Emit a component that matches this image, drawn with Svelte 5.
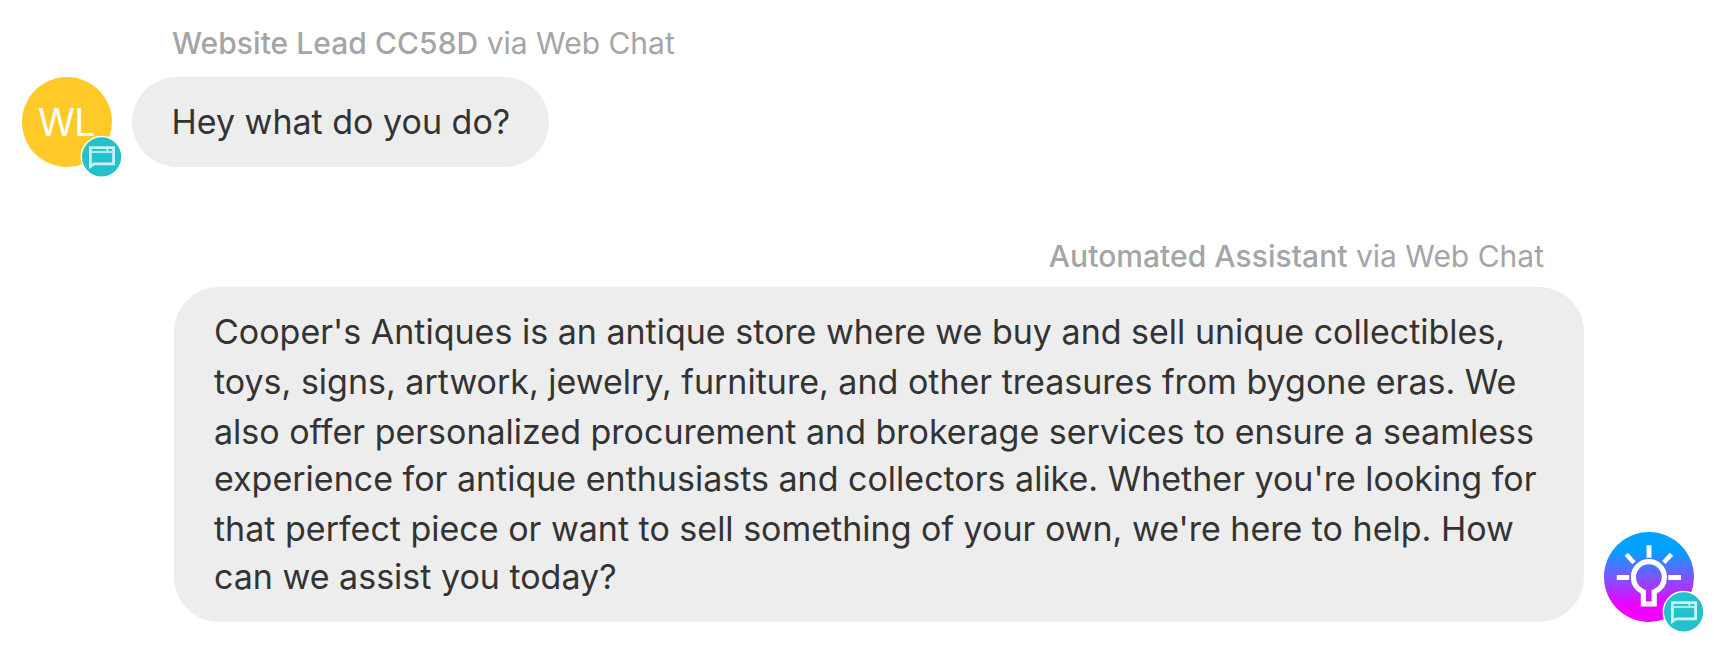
<script>
  const question = 'Hey what do you do?';
  const answer = [
    "Cooper's Antiques is an antique store where we buy and sell unique collectibles,",
    'toys, signs, artwork, jewelry, furniture, and other treasures from bygone eras. We',
    'also offer personalized procurement and brokerage services to ensure a seamless',
    "experience for antique enthusiasts and collectors alike. Whether you're looking for",
    "that perfect piece or want to sell something of your own, we're here to help. How",
    'can we assist you today?'
  ];
</script>

{#snippet badge()}
  <span class="badge">
    <svg viewBox="0 0 42 42" width="42" height="42">
      <circle cx="20.6" cy="20.8" r="20.3" fill="#22c1cc" stroke="#fff" stroke-width="1.4" />
      <path d="M9.4 11.6H32.6V27.8H13L9.4 30.4V11.6Z" fill="none" stroke="#c9f2f5" stroke-width="2.8" />
      <path d="M10 16H32" stroke="#a9e8ec" stroke-width="2.2" />
      <path d="M26.4 12V15.4" stroke="#d9f6f8" stroke-width="1.6" />
    </svg>
  </span>
{/snippet}

<main class="chat">
  <section class="message incoming">
    <header class="meta"><b>Website Lead CC58D</b> via Web Chat</header>
    <div class="row">
      <div class="avatar lead"><span class="initials">WL</span>{@render badge()}</div>
      <div class="bubble"><p>{question}</p></div>
    </div>
  </section>

  <section class="message outgoing">
    <header class="meta"><b>Automated Assistant</b> via Web Chat</header>
    <div class="row">
      <div class="bubble">
        {#each answer as line}<p>{line}</p>{/each}
      </div>
      <div class="avatar assistant">
        <svg viewBox="0 0 90 90" width="90" height="90" fill="none" stroke="#fff">
          <path d="M39.4 60V72H50.2V60C56.4 57.3 60.4 52 60.4 45.1A15.5 15.5 0 0 0 29.4 45.1C29.4 52 33.2 57.3 39.4 60Z" stroke-width="5.2" />
          <path d="M45 13.3V25.7M12.8 45.4H25.2M64.3 45.4H77" stroke-width="5" />
          <path d="M22.3 22.3L30 30.7M67.5 22.3L59.8 30.5" stroke-width="4.6" />
        </svg>
        {@render badge()}
      </div>
    </div>
  </section>
</main>

<style>
  :global(body) {
    background: #fff;
  }
  .chat {
    box-sizing: border-box;
    width: 1714px;
    height: 663px;
    padding: 23px 20px 0 22px;
    display: flex;
    flex-direction: column;
    gap: 68px;
    overflow: hidden;
    font-family: Inter, sans-serif;
  }
  .message {
    display: flex;
    flex-direction: column;
    gap: 13px;
  }
  .outgoing {
    gap: 11px;
  }
  .meta {
    height: 40px;
    line-height: 40px;
    font-size: 30px;
    color: #a5a5a5;
    white-space: nowrap;
  }
  .meta b {
    font-weight: 500;
    letter-spacing: 0.04px;
  }
  .incoming .meta {
    padding-left: 150px;
  }
  .outgoing .meta {
    height: 41px;
    line-height: 42px;
    padding-right: 150px;
    text-align: right;
  }
  .row {
    display: flex;
    align-items: flex-end;
    gap: 20px;
  }
  .incoming .row {
    margin-left: -0.5px;
    margin-top: 0.5px;
  }
  .outgoing .row {
    justify-content: flex-end;
  }
  .bubble {
    box-sizing: border-box;
    border-radius: 45px;
    background: #ededed;
    padding: 20px 40px;
    color: #333;
    font-size: 34px;
    line-height: 49px;
    white-space: nowrap;
  }
  .incoming .bubble {
    width: 417px;
    height: 90px;
    padding-top: 20px;
  }
  .outgoing .bubble {
    width: 1410px;
    height: 335px;
  }
  p {
    margin: 0;
    height: 50px;
  }
  p:nth-child(3),
  p:nth-child(5) {
    height: 47.5px;
  }
  .avatar {
    position: relative;
    flex: none;
    width: 90px;
    height: 90px;
    border-radius: 50%;
    display: flex;
    align-items: center;
    justify-content: center;
  }
  .lead {
    background: #ffca28;
  }
  .assistant {
    background: linear-gradient(#00a2ff 20%, #7a57ff 50%, #f000ff 82%);
  }
  .initials {
    color: #fff;
    font-size: 37.5px;
    font-weight: 400;
    letter-spacing: -0.5px;
    padding-top: 1px;
  }
  .badge {
    position: absolute;
    right: -11px;
    bottom: -11px;
    width: 42px;
    height: 42px;
  }
  svg {
    display: block;
    overflow: visible;
  }
</style>
